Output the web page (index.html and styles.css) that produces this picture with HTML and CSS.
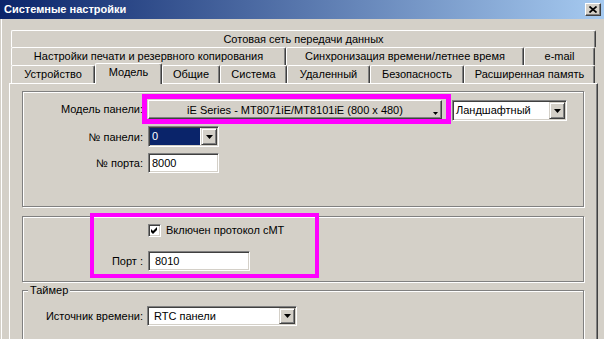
FILE: index.html
```html
<!DOCTYPE html>
<html lang="ru">
<head>
    <meta charset="UTF-8">
    <title>Системные настройки</title>
    <link rel="stylesheet" href="styles.css">
</head>
<body>

<div class="window">
    <div class="titlebar">
        <span class="title">Системные настройки</span>
        <span class="close">
            <svg width="8" height="7" viewBox="0 0 8 7"><path d="M0.5 0.5 L7.5 6.5 M7.5 0.5 L0.5 6.5" stroke="#000" stroke-width="1.7" fill="none"/></svg>
        </span>
    </div>

    <div class="client">
        <div class="tabs">
            <div class="tab-row row-top">
                <div class="tab tab-wide">Сотовая сеть передачи данных</div>
            </div>
            <div class="tab-row">
                <div class="tab" style="width: 275px">Настройки печати и резервного копирования</div>
                <div class="tab" style="width: 238px">Синхронизация времени/летнее время</div>
                <div class="tab" style="width: 71px">e-mail</div>
            </div>
            <div class="tab-row">
                <div class="tab" style="width: 84px">Устройство</div>
                <div class="tab active" style="width: 67px">Модель</div>
                <div class="tab" style="width: 58px">Общие</div>
                <div class="tab" style="width: 67px">Система</div>
                <div class="tab" style="width: 83px">Удаленный</div>
                <div class="tab" style="width: 94px">Безопасность</div>
                <div class="tab" style="width: 131px">Расширенная память</div>
            </div>
        </div>

        <div class="panel">
            <div class="group group-model">
                <div class="row row-first">
                    <span class="label">Модель панели:</span>
                    <div class="raised model-button">
                        <span class="spacer"></span>
                        <span>iE Series - MT8071iE/MT8101iE (800 x 480)</span>
                        <svg class="mini-arrow" width="5" height="3" viewBox="0 0 5 3"><path d="M0 0 H5 L2.5 3 Z" fill="#000"/></svg>
                    </div>
                    <div class="field combo combo-orient">
                        <span class="value">Ландшафтный</span>
                        <span class="drop"><svg width="7" height="4" viewBox="0 0 7 4"><path d="M0 0 H7 L3.5 4 Z" fill="#000"/></svg></span>
                    </div>
                </div>
                <div class="row row-second">
                    <span class="label">№ панели:</span>
                    <div class="field combo combo-panel">
                        <span class="value selected">0</span>
                        <span class="drop"><svg width="7" height="4" viewBox="0 0 7 4"><path d="M0 0 H7 L3.5 4 Z" fill="#000"/></svg></span>
                    </div>
                </div>
                <div class="row row-third">
                    <span class="label">№ порта:</span>
                    <div class="field input input-short">8000</div>
                </div>
                <div class="highlight highlight-model"></div>
            </div>

            <div class="group group-cmt">
                <div class="row">
                    <span class="label"></span>
                    <span class="checkbox">
                        <svg width="7" height="7" viewBox="0 0 7 7"><path d="M0 2 L2 4 L6 0 L6 3 L2 7 L0 5 Z" fill="#000"/></svg>
                    </span>
                    <span class="check-text">Включен протокол cMT</span>
                </div>
                <div class="row row-port">
                    <span class="label">Порт :</span>
                    <div class="field input input-port">8010</div>
                </div>
                <div class="highlight highlight-cmt"></div>
            </div>

            <div class="group group-timer">
                <span class="legend">Таймер</span>
                <div class="row">
                    <span class="label label-timer">Источник времени:</span>
                    <div class="field combo combo-time">
                        <span class="value">RTC панели</span>
                        <span class="drop"><svg width="7" height="4" viewBox="0 0 7 4"><path d="M0 0 H7 L3.5 4 Z" fill="#000"/></svg></span>
                    </div>
                </div>
            </div>
        </div>
    </div>
</div>

</body>
</html>
```

FILE: styles.css
```css
* {
    box-sizing: border-box;
}
body {
    margin: 0;
    width: 604px;
    height: 339px;
    overflow: hidden;
    background-color: #d4d0c8;
    font-family: "Liberation Sans", Arial, sans-serif;
    font-size: 11px;
    color: #000;
}
.window {
    height: 339px;
    display: flex;
    flex-direction: column;
    overflow: hidden;
}

/* title bar */
.titlebar {
    height: 19px;
    flex: none;
    display: flex;
    align-items: flex-start;
    justify-content: space-between;
    padding: 0 3px 0 4px;
    background: linear-gradient(to right, #0a246a, #a6caf0);
}
.title {
    color: #fff;
    font-weight: bold;
    line-height: 18px;
}
.close {
    width: 16px;
    height: 13px;
    margin-top: 3px;
    display: flex;
    align-items: center;
    justify-content: center;
    background-color: #d4d0c8;
    border: 1px solid;
    border-color: #fff #404040 #404040 #fff;
    box-shadow: inset -1px -1px #808080;
}

.client {
    flex: 1;
    min-height: 0;
    display: flex;
    flex-direction: column;
    padding: 11px 6px 0 9px;
    box-shadow: inset 1px 0 #d4d0c8, inset 2px 0 #fff;
}

/* tabs */
.tabs {
    margin: 0 2px;
}
.tab-row {
    display: flex;
}
.tab {
    height: 18px;
    line-height: 17px;
    text-align: center;
    white-space: nowrap;
    border-top: 1px solid #fff;
    border-left: 1px solid #fff;
    border-right: 1px solid #404040;
    border-radius: 2px 2px 0 0;
    box-shadow: inset -1px 0 #808080;
    background-color: #d4d0c8;
}
.row-top .tab {
    height: 17px;
    line-height: 16px;
}
.tab-wide {
    flex: 1;
}
.tab.active {
    position: relative;
    z-index: 1;
    height: 21px;
    margin-top: -2px;
    margin-bottom: -1px;
    line-height: 16px;
}

/* page */
.panel {
    flex: 1;
    min-height: 0;
    display: flex;
    flex-direction: column;
    border-top: 1px solid #fff;
    border-left: 1px solid #fff;
    border-right: 1px solid #404040;
    box-shadow: inset -1px 0 #808080;
    padding: 7px 13px 0 12px;
}
.group {
    position: relative;
    flex: none;
    border: 1px solid #808080;
    box-shadow: inset 1px 1px #fff, 1px 1px #fff;
}
.group-model {
    height: 116px;
    padding-top: 8px;
}
.group-cmt {
    height: 66px;
    margin-top: 9px;
    padding-top: 7px;
}
.group-timer {
    flex: 1;
    margin-top: 8px;
    margin-bottom: -4px;
    padding-top: 15px;
}
.legend {
    position: absolute;
    left: 5px;
    top: -7px;
    padding: 0 2px;
    line-height: 13px;
    background-color: #d4d0c8;
}

.row {
    display: flex;
    align-items: center;
}
.row-first {
    align-items: flex-start;
}
.row-second {
    margin-top: 5px;
}
.row-third {
    margin-top: 6px;
}
.row-port {
    margin-top: 14px;
}
.label {
    width: 120px;
    margin-right: 5px;
    text-align: right;
    white-space: nowrap;
}
.row-first .label {
    line-height: 19px;
}
.label-timer {
    margin-right: 4px;
}

/* controls */
.raised {
    background-color: #d4d0c8;
    border: 1px solid;
    border-color: #fff #404040 #404040 #fff;
    box-shadow: inset -1px -1px #808080;
}
.field {
    background-color: #fff;
    border: 1px solid;
    border-color: #808080 #fff #fff #808080;
    box-shadow: inset 1px 1px #404040, inset -1px -1px #d4d0c8;
    padding: 1px;
}
.model-button {
    width: 294px;
    height: 19px;
    display: flex;
    justify-content: space-between;
    align-items: center;
    padding: 0 3px 0 3px;
    margin-right: 10px;
    white-space: nowrap;
}
.spacer {
    width: 5px;
}
.mini-arrow {
    align-self: flex-end;
    margin-bottom: 3px;
}
.combo {
    height: 21px;
    display: flex;
}
.combo .value {
    flex: 1;
    padding-left: 2px;
    line-height: 17px;
    white-space: nowrap;
}
.combo .drop {
    width: 16px;
    display: flex;
    align-items: center;
    justify-content: center;
    background-color: #d4d0c8;
    border: 1px solid;
    border-color: #d4d0c8 #404040 #404040 #d4d0c8;
    box-shadow: inset 1px 1px #fff, inset -1px -1px #808080;
}
.combo-orient {
    width: 115px;
}
.combo-panel {
    width: 71px;
}
.combo-panel .value {
    margin: 0 1px 0 0;
}
.selected {
    background-color: #0a246a;
    color: #fff;
}
.combo-time {
    width: 150px;
    height: 20px;
}
.combo-time .value {
    padding-left: 5px;
    line-height: 16px;
}
.input {
    height: 20px;
    padding: 1px 3px;
    line-height: 16px;
}
.input-short {
    width: 71px;
}
.input-port {
    width: 102px;
    padding-left: 6px;
}
.checkbox {
    width: 13px;
    height: 13px;
    display: flex;
    align-items: center;
    justify-content: center;
    background-color: #fff;
    border: 1px solid;
    border-color: #808080 #fff #fff #808080;
    box-shadow: inset 1px 1px #404040, inset -1px -1px #d4d0c8;
}
.check-text {
    margin-left: 5px;
    line-height: 13px;
}

/* magenta marks drawn over the form */
.highlight {
    position: absolute;
    border: 5px solid #ff00ff;
}
.highlight-model {
    left: 119px;
    top: 2px;
    width: 309px;
    height: 30px;
}
.highlight-cmt {
    border-width: 4px;
    left: 67px;
    top: -4px;
    width: 229px;
    height: 65px;
}
```
